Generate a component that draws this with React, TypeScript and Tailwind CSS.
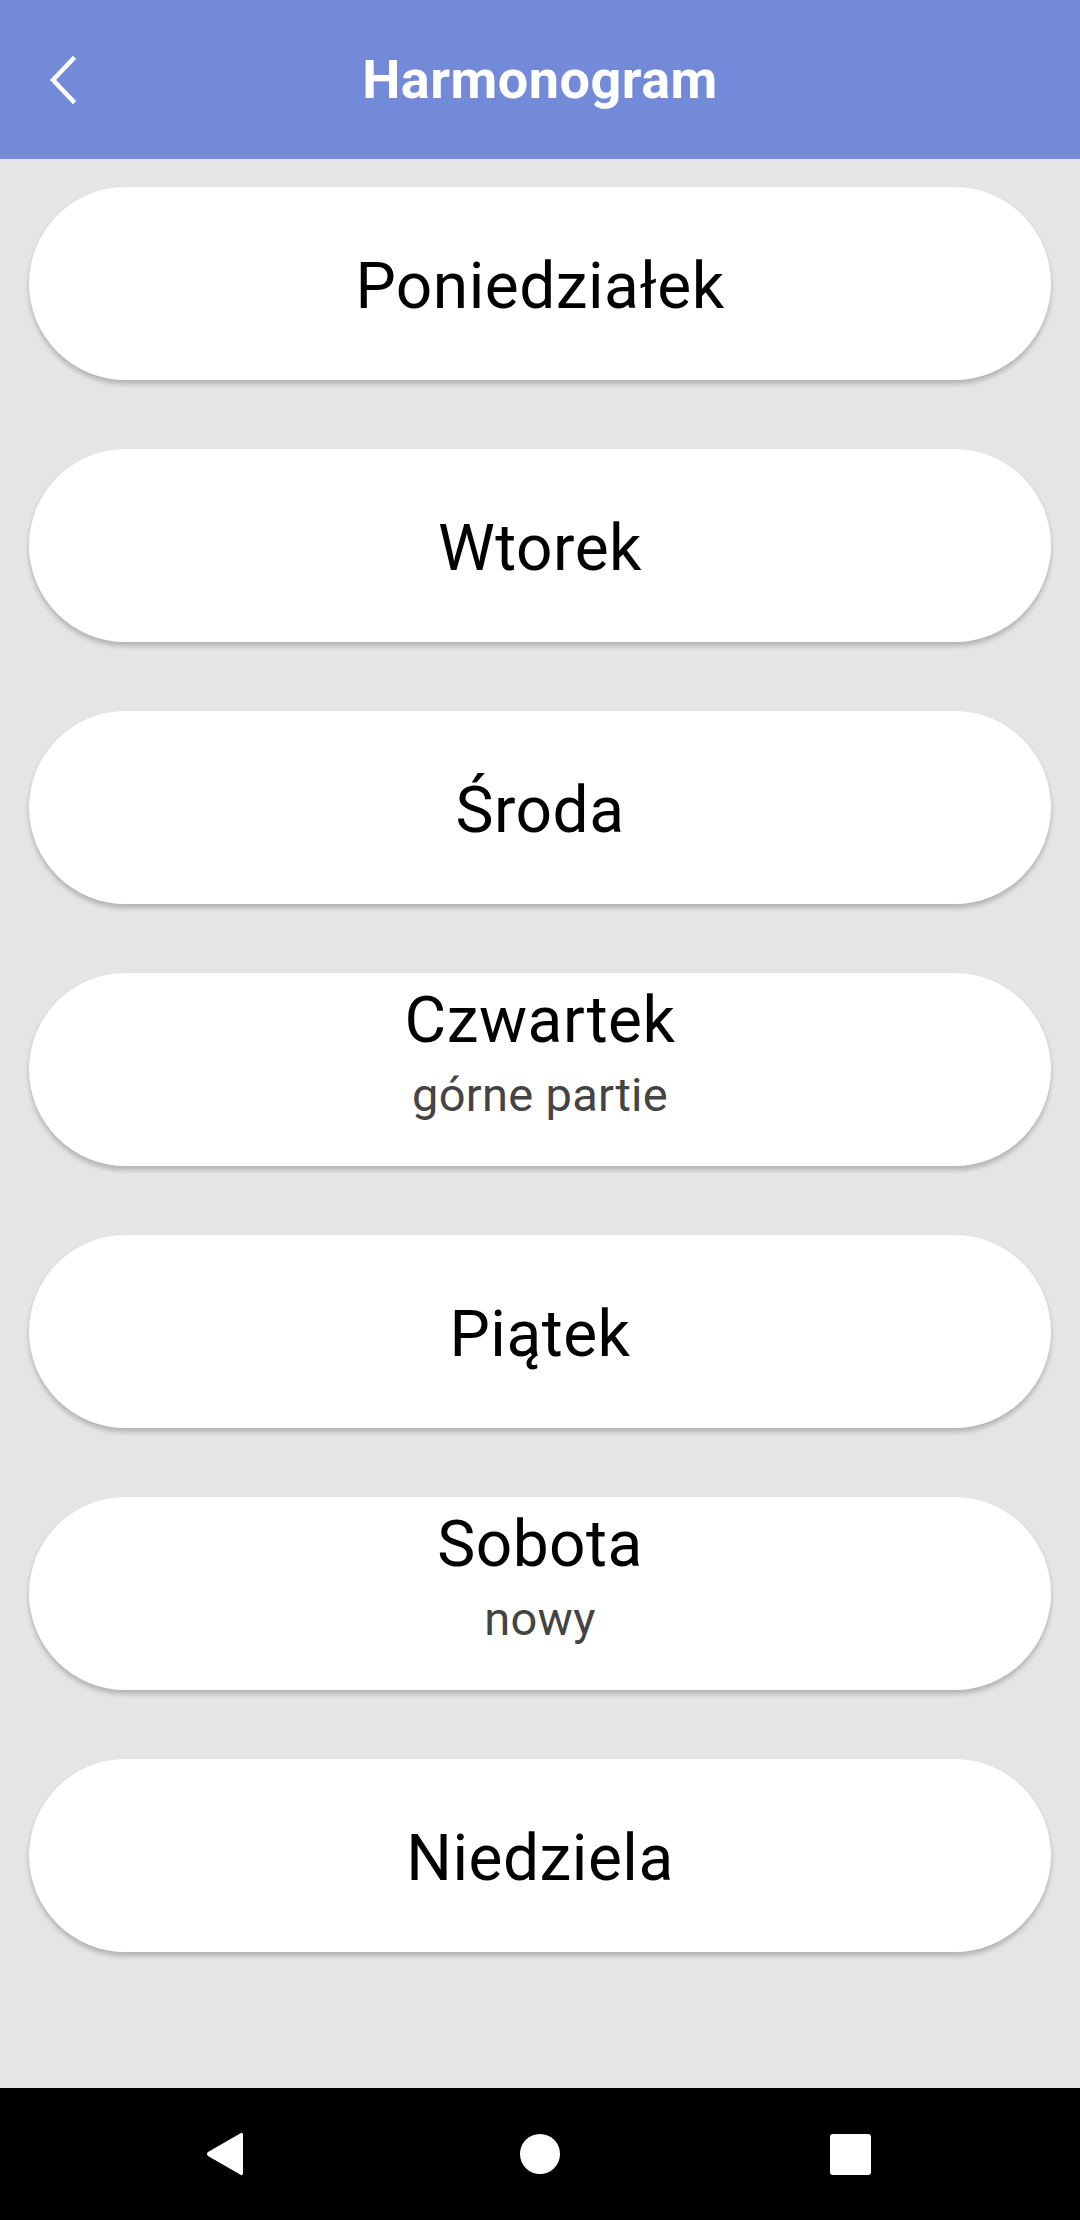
import React from "react";

const days = [
  { title: "Poniedziałek", subtitle: "" },
  { title: "Wtorek", subtitle: "" },
  { title: "Środa", subtitle: "" },
  { title: "Czwartek", subtitle: "górne partie" },
  { title: "Piątek", subtitle: "" },
  { title: "Sobota", subtitle: "nowy" },
  { title: "Niedziela", subtitle: "" },
];

const BackChevron = () => (
  <svg width="30" height="50" viewBox="0 0 30 50" fill="none">
    <path
      d="M25 4 L5 25 L25 46"
      stroke="white"
      strokeWidth="4.5"
      strokeLinecap="square"
    />
  </svg>
);

const Header = () => (
  <header className="h-[159px] w-full bg-[#738ad9] flex items-center relative shrink-0">
    <div className="absolute left-[48px] top-[55px]">
      <BackChevron />
    </div>
    <h1 className="w-full text-center text-white font-bold text-[54px] leading-none tracking-[0.5px]">
      Harmonogram
    </h1>
  </header>
);

const DayCard = ({ title, subtitle }: { title: string; subtitle: string }) => (
  <button
    className={`w-full h-[193px] bg-white rounded-full flex flex-col items-center shadow-[0_4px_5px_rgba(0,0,0,0.22)] ${
      subtitle ? "justify-start pt-[10px]" : "justify-center pt-[6px]"
    }`}
  >
    <span className="text-[64px] leading-[75px] tracking-[0.5px] text-black">
      {title}
    </span>
    {subtitle ? (
      <span className="mt-[9px] text-[47px] leading-[55px] tracking-[0.3px] text-[#444444]">
        {subtitle}
      </span>
    ) : null}
  </button>
);

const NavBar = () => (
  <nav className="h-[132px] w-full bg-black flex items-center shrink-0">
    <div className="w-[520px] flex justify-end pr-[275px]">
      <svg width="40" height="46" viewBox="0 0 40 46">
        <path
          d="M36 2 Q38 1 38 4 L38 42 Q38 45 36 44 L3 25 Q1 23 3 21 Z"
          fill="white"
        />
      </svg>
    </div>
    <div className="w-[40px] h-[40px] rounded-full bg-white" />
    <div className="flex-1 flex pl-[270px]">
      <div className="w-[41px] h-[41px] rounded-[3px] bg-white" />
    </div>
  </nav>
);

const App = () => {
  return (
    <div
      className="w-[1080px] h-[2220px] bg-[#e5e5e5] flex flex-col overflow-hidden"
      style={{ fontFamily: "Roboto, 'Noto Sans', sans-serif" }}
    >
      <Header />
      <main className="flex-1 px-[29px] pt-[28px] flex flex-col gap-[69px]">
        {days.map((day) => (
          <DayCard key={day.title} title={day.title} subtitle={day.subtitle} />
        ))}
      </main>
      <NavBar />
    </div>
  );
};

export default App;
